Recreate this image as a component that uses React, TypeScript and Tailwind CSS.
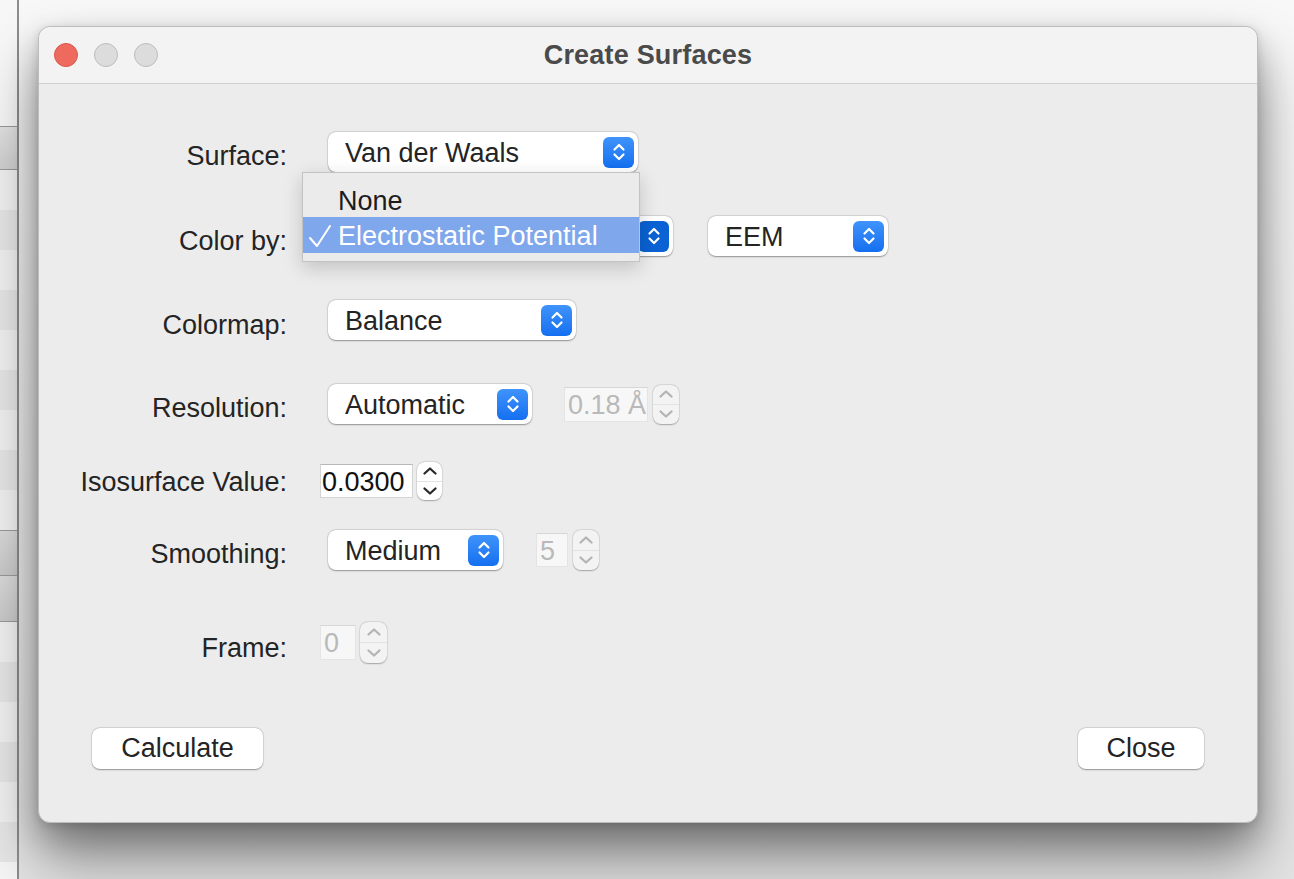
import React from "react";

type Tone = "light" | "pressed";

function ChevronPair({ color, size = 14 }: { color: string; size?: number }) {
  return (
    <svg width={size} height={size + 6} viewBox="0 0 14 20" fill="none">
      <path d="M2.5 7.5 L7 3 L11.5 7.5" stroke={color} strokeWidth="2.2" strokeLinecap="round" strokeLinejoin="round" />
      <path d="M2.5 12.5 L7 17 L11.5 12.5" stroke={color} strokeWidth="2.2" strokeLinecap="round" strokeLinejoin="round" />
    </svg>
  );
}

function PopUp({
  label,
  width,
  margin = "ml-[8px]",
  tone = "light",
}: {
  label: string;
  width: string;
  margin?: string;
  tone?: Tone;
}) {
  return (
    <div
      className={`${margin} ${width} flex h-[40px] shrink-0 items-center justify-between rounded-[8px] bg-white pl-[17px] pr-[4px] shadow-[0_0.5px_1.5px_rgba(0,0,0,0.35),0_0_0_0.5px_rgba(0,0,0,0.1)]`}>
      <span className="pt-[2px] leading-none">{label}</span>
      <span
        className={`flex h-[31px] w-[31px] items-center justify-center rounded-[6px] ${
          tone === "pressed"
            ? "bg-[#0a62d4]"
            : "bg-gradient-to-b from-[#3f93fa] to-[#146ff0]"
        }`}>
        <ChevronPair color="#ffffff" />
      </span>
    </div>
  );
}

function Field({
  value,
  width,
  height,
  disabled,
  pad = "pl-[3px]",
  margin = "",
}: {
  value: string;
  width: string;
  height: string;
  disabled?: boolean;
  pad?: string;
  margin?: string;
}) {
  return (
    <div
      className={`${margin} ${width} ${height} ${pad} flex shrink-0 items-center border pt-[2px] leading-none ${
        disabled
          ? "border-[#e4e4e4] border-t-[#d6d6d6] bg-[#f7f7f7] text-[#b9b9b9]"
          : "border-[#d4d4d4] border-t-[#b8b8b8] bg-white text-[#111]"
      }`}>
      {value}
    </div>
  );
}

function Stepper({
  width,
  height,
  disabled,
  margin = "ml-[5px]",
}: {
  width: string;
  height: string;
  disabled?: boolean;
  margin?: string;
}) {
  const c = disabled ? "#b4b4b4" : "#2a2a2a";
  return (
    <div
      className={`${margin} ${width} ${height} flex shrink-0 flex-col rounded-[8px] shadow-[0_0.5px_1.5px_rgba(0,0,0,0.28),0_0_0_0.5px_rgba(0,0,0,0.08)] ${
        disabled ? "bg-[#f3f3f3]" : "bg-white"
      }`}>
      <div className="flex flex-1 items-center justify-center border-b border-[#e2e2e2]">
        <svg width="16" height="10" viewBox="0 0 16 10" fill="none">
          <path d="M2.5 7.5 L8 2.5 L13.5 7.5" stroke={c} strokeWidth="2.3" strokeLinecap="round" strokeLinejoin="round" />
        </svg>
      </div>
      <div className="flex flex-1 items-center justify-center">
        <svg width="16" height="10" viewBox="0 0 16 10" fill="none">
          <path d="M2.5 2.5 L8 7.5 L13.5 2.5" stroke={c} strokeWidth="2.3" strokeLinecap="round" strokeLinejoin="round" />
        </svg>
      </div>
    </div>
  );
}

function Row({
  label,
  top,
  height,
  shift,
  children,
}: {
  label: string;
  top: string;
  height: string;
  shift: string;
  children: React.ReactNode;
}) {
  return (
    <div className={`${top} ${height} flex items-center`}>
      <div className={`w-[248px] shrink-0 text-right leading-none ${shift}`}>{label}</div>
      <div className="ml-[33px] flex items-center">{children}</div>
    </div>
  );
}

function BackgroundStrip() {
  const rows = Array.from({ length: 9 });
  return (
    <div className="flex h-full w-[19px] shrink-0 flex-col border-r-2 border-[#8d8d8d] bg-[#f5f5f5]">
      <div className="h-[126px] bg-[#f7f7f7]" />
      <div className="h-[44px] border-y border-[#9a9a9a] bg-gradient-to-b from-[#e2e2e2] to-[#cfcfcf]" />
      {rows.map((_, i) => (
        <div key={i} className={`h-[40px] ${i % 2 === 0 ? "bg-[#f1f1f1]" : "bg-[#e6e6e6]"}`} />
      ))}
      <div className="h-[46px] border-y border-[#9a9a9a] bg-gradient-to-b from-[#dadada] to-[#c9c9c9]" />
      <div className="h-[46px] border-b border-[#9a9a9a] bg-gradient-to-b from-[#dadada] to-[#c9c9c9]" />
      {rows.slice(0, 6).map((_, i) => (
        <div key={i} className={`h-[40px] ${i % 2 === 0 ? "bg-[#f1f1f1]" : "bg-[#e6e6e6]"}`} />
      ))}
    </div>
  );
}

export default function App() {
  return (
    <div className="flex h-[879px] w-[1294px] overflow-hidden bg-[#ececec] font-['Liberation_Sans',Arial,sans-serif] text-[27px] text-[#242424]">
      <BackgroundStrip />
      <div className="flex-1 bg-gradient-to-b from-[#f8f8f8] via-[#eeeeee] to-[#e4e4e4] pl-[19px] pt-[26px]">
        <div className="relative flex h-[797px] w-[1220px] flex-col overflow-visible rounded-[12px] border border-[#bdbdbd] bg-[#ececec] shadow-[0_36px_60px_rgba(0,0,0,0.42),0_14px_30px_rgba(0,0,0,0.2),0_2px_8px_rgba(0,0,0,0.12)]">
          {/* title bar */}
          <div className="relative flex h-[57px] shrink-0 items-center justify-center rounded-t-[12px] border-b border-[#cfcfcf] bg-[#f3f3f3]">
            <div className="absolute left-[15px] top-[16px] flex gap-[16px]">
              <span className="h-[24px] w-[24px] rounded-full border border-[#d8584d] bg-[#ee6a5f]" />
              <span className="h-[24px] w-[24px] rounded-full border border-[#bdbdbd] bg-[#dcdcdc]" />
              <span className="h-[24px] w-[24px] rounded-full border border-[#bdbdbd] bg-[#dcdcdc]" />
            </div>
            <span className="text-[27px] font-bold leading-none tracking-[0.2px] text-[#4a4a4a]">Create Surfaces</span>
          </div>

          {/* form */}
          <div className="flex flex-col">
            <Row label="Surface:" top="mt-[48px]" height="h-[40px]" shift="pt-[9px]">
              <PopUp label="Van der Waals" width="w-[310px]" />
            </Row>
            <Row label="Color by:" top="mt-[44px]" height="h-[40px]" shift="pt-[11px]">
              <PopUp label="" width="w-[345px]" tone="pressed" />
              <PopUp label="EEM" width="w-[180px]" margin="ml-[35px]" />
            </Row>
            <Row label="Colormap:" top="mt-[44px]" height="h-[40px]" shift="pt-[10px]">
              <PopUp label="Balance" width="w-[248px]" />
            </Row>
            <Row label="Resolution:" top="mt-[44px]" height="h-[40px]" shift="pt-[8px]">
              <PopUp label="Automatic" width="w-[204px]" />
              <Field value="0.18 Å" width="w-[84px]" height="h-[35px]" margin="ml-[32px]" disabled />
              <Stepper width="w-[26px]" height="h-[39px]" disabled />
            </Row>
            <Row label="Isosurface Value:" top="mt-[38px]" height="h-[38px]" shift="pt-[3px]">
              <Field value="0.0300" width="w-[93px]" height="h-[34px]" pad="pl-[1px]" />
              <Stepper width="w-[25px]" height="h-[38px]" margin="ml-[4px]" />
            </Row>
            <Row label="Smoothing:" top="mt-[30px]" height="h-[40px]" shift="pt-[8px]">
              <PopUp label="Medium" width="w-[175px]" />
              <Field value="5" width="w-[32px]" height="h-[34px]" margin="ml-[33px]" disabled />
              <Stepper width="w-[26px]" height="h-[40px]" disabled />
            </Row>
            <Row label="Frame:" top="mt-[52px]" height="h-[41px]" shift="pt-[11px]">
              <Field value="0" width="w-[36px]" height="h-[35px]" disabled />
              <Stepper width="w-[27px]" height="h-[41px]" margin="ml-[4px]" disabled />
            </Row>

            <div className="mt-[65px] flex justify-between px-[53px]">
              <button
                type="button"
                className="flex h-[41px] w-[171px] items-center justify-center rounded-[8px] bg-white leading-none shadow-[0_0.5px_1.5px_rgba(0,0,0,0.35),0_0_0_0.5px_rgba(0,0,0,0.1)]">
                Calculate
              </button>
              <button
                type="button"
                className="flex h-[41px] w-[126px] items-center justify-center rounded-[8px] bg-white leading-none shadow-[0_0.5px_1.5px_rgba(0,0,0,0.35),0_0_0_0.5px_rgba(0,0,0,0.1)]">
                Close
              </button>
            </div>
          </div>

          {/* open popup menu */}
          <div className="absolute left-[263px] top-[145px] flex w-[338px] flex-col border border-[#c3c3c3] bg-[#ebebeb] py-[8px] shadow-[0_6px_18px_rgba(0,0,0,0.18)]">
            <div className="flex h-[36px] items-center pl-[35px] pt-[4px] leading-none text-[#1c1c1c]">None</div>
            <div className="relative flex h-[36px] items-center bg-[#7fa7eb] pl-[35px] pt-[2px] leading-none text-white">
              <svg className="absolute left-[5px] top-[8px]" width="24" height="24" viewBox="0 0 24 24" fill="none">
                <path d="M2 13 L9 21 L22 1" stroke="#ffffff" strokeWidth="2" strokeLinecap="round" strokeLinejoin="round" />
              </svg>
              Electrostatic Potential
            </div>
          </div>
        </div>
      </div>
    </div>
  );
}
